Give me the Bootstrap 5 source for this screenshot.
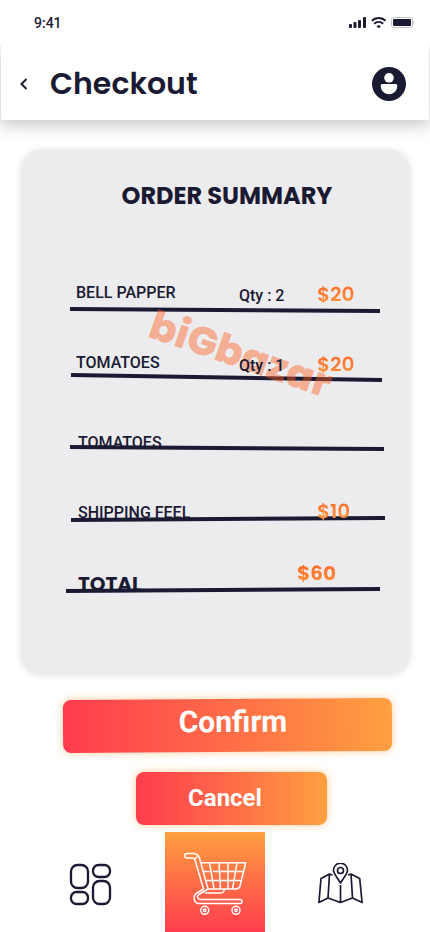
<!DOCTYPE html>
<html lang="en">
<head>
<meta charset="utf-8">
<meta name="viewport" content="width=device-width, initial-scale=1">
<title>Checkout</title>
<link href="https://cdn.jsdelivr.net/npm/bootstrap@5.3.0/dist/css/bootstrap.min.css" rel="stylesheet">
<style>
  :root { --ink: #1b1a33; --sun: #ffa040; --rose: #ff3c4e; }
  body { font-family: Roboto, "Liberation Sans", sans-serif; color: var(--ink); background: #fff; }
  .geo { font-family: Poppins, Inter, sans-serif; }
  svg { display: block; }

  .statusbar { height: 44px; padding: 2px 16px 0 34px; font-size: 14px; background: #fff; z-index: 2; }
  .topbar { height: 76px; margin: 0 1px; padding: 4px 23px 0 18px; background: #fff; box-shadow: 0 4px 16px rgba(0,0,0,.25); z-index: 1; }
  .topbar h1 { font-size: 30px; line-height: 40px; font-weight: 600; }
  .back { margin-right: 20px; }

  .summary { margin: 30px 21px 0 22px; padding: 32px 29px 81px 48px; background: #ececee; border-radius: 20px; box-shadow: 0 1px 8px rgba(0,0,0,.16); }
  .summary h2 { font-size: 24px; line-height: 28px; font-weight: 700; padding-left: 4px; margin-bottom: 32px; }

  .line-item { display: grid; grid-template-columns: 1fr 78px 63px; align-items: end; height: 70px; padding-left: 8px; }
  .line-item > * { grid-row: 1; }
  .item-name, .item-qty { font-size: 16px; line-height: 16px; font-weight: 500; padding-bottom: 1px; }
  .item-name { grid-column: 1; }
  .item-qty { grid-column: 2; position: relative; z-index: 3; }
  .item-price { grid-column: 3; justify-self: start; font-size: 20px; line-height: 20px; font-weight: 600; padding-bottom: 1px; position: relative; z-index: 3;
    color: transparent; background: linear-gradient(#ff6a2b, var(--sun)); -webkit-background-clip: text; background-clip: text; }
  .rule { grid-column: 1 / -1; width: calc(100% + 8px); height: 10px; margin: 0 0 -5px -8px; position: relative; z-index: 1; overflow: visible; }
  .rule line { stroke: var(--ink); stroke-width: 4; }
  .product { padding-left: 6px; }
  .product .rule { width: calc(100% + 6px); margin-left: -6px; }
  .product .item-name { padding-bottom: 11px; }
  .product .item-qty, .product .item-price { padding-bottom: 8px; }
  .wide-rule { margin-right: -4px; grid-template-columns: 1fr 78px 67px; }
  .item-total { margin-left: -4px; padding-left: 12px; grid-template-columns: 1fr 83px; }
  .item-total .rule { width: calc(100% + 12px); margin-left: -12px; }
  .item-total .item-name { font-size: 20px; line-height: 16px; font-weight: 700; padding-bottom: 0; }
  .item-total .item-price { grid-column: 2; padding-bottom: 9px; font-weight: 700; }

  .watermark { position: absolute; left: 76px; top: 88px; z-index: 2; font-size: 40px; line-height: 48px; font-weight: 800;
    color: rgba(255,96,33,.45); transform: rotate(19deg); pointer-events: none; }

  .action { border: 0; border-radius: 8px; height: 53px; color: #fff; font-weight: 700; background: linear-gradient(90deg, var(--rose), #ff6a48 48%, var(--sun)); box-shadow: 0 0 8px rgba(255,160,64,.5); }
  .action:hover { color: #fff; }
  .confirm { margin: 26px 38px 0 63px; padding: 0 0 8px 11px; font-size: 30px; line-height: 36px; transform: rotate(-.35deg); }
  .cancel { margin: 20px 103px 0 136px; padding: 0 13px 2px 0; font-size: 24px; line-height: 28px; }

  .tabs { gap: 53px; margin-top: 7px; padding-left: 2px; }
  .side-tab { padding-top: 4px; }
  .cart-tab { width: 100px; height: 100px; background: linear-gradient(var(--sun), var(--rose)); }
</style>
<script src="https://cdn.jsdelivr.net/npm/bootstrap@5.3.0/dist/js/bootstrap.bundle.min.js"></script>
</head>
<body>
<div class="d-flex flex-column min-vh-100">
  <div class="statusbar d-flex align-items-center justify-content-between position-relative">
    <span class="fw-medium">9:41</span>
    <svg width="67" height="12" viewBox="0 0 67 12" aria-hidden="true">
      <g fill="#1b1a33">
        <rect x="2" y="7" width="3" height="4" rx="1"/><rect x="6.500" y="5" width="3" height="6" rx="1"/>
        <rect x="11" y="3" width="3" height="8" rx="1"/><rect x="16" y="0" width="3" height="11" rx="1"/>
        <path d="M29.400 9.200l2.300 2 2.300-2a3.400 3.400 0 0 0-4.600 0z"/>
        <rect x="46" y="2" width="18" height="7" rx="1"/>
      </g>
      <path d="M24.800 3.700a10 10 0 0 1 13.800 0M27.200 6.700a6.500 6.500 0 0 1 9 0" fill="none" stroke="#1b1a33" stroke-width="1.900"/>
      <rect x="44.500" y=".5" width="21" height="10" rx="2.500" fill="none" stroke="#c3c3ca"/>
      <path d="M66 3.500v4q1-.6 1-2t-1-2z" fill="#c3c3ca"/>
    </svg>
  </div>

  <header class="topbar d-flex align-items-center position-relative">
    <a href="#" class="back" aria-label="Back">
      <svg width="11" height="16" viewBox="0 0 11 16"><path d="M7.500 3L2.500 8l5 5" fill="none" stroke="#1b1a33" stroke-width="2"/></svg>
    </a>
    <h1 class="geo m-0 flex-grow-1">Checkout</h1>
    <a href="#" aria-label="Account">
      <svg width="34" height="34" viewBox="0 0 34 34"><circle cx="17" cy="17" r="17" fill="#1b1a33"/><circle cx="17" cy="10.800" r="4.800" fill="#fff"/><path d="M8.700 18.500q0-1.500 1.500-1.500h13.600q1.500 0 1.500 1.500c0 5-3.500 8.700-8.300 8.700s-8.300-3.700-8.300-8.700z" fill="#fff"/></svg>
    </a>
  </header>

  <main class="d-flex flex-column">
    <section class="summary">
      <h2 class="geo text-center">ORDER SUMMARY</h2>
      <div class="position-relative">
        <ul class="list-unstyled m-0">
          <li class="line-item product">
            <span class="item-name">BELL PAPPER</span>
            <span class="item-qty">Qty : 2</span>
            <span class="item-price geo">$20</span>
            <svg class="rule" viewBox="0 0 310 10" preserveAspectRatio="none"><line x1="0" y1="2" x2="310" y2="4"/></svg>
          </li>
          <li class="line-item product">
            <span class="item-name">TOMATOES</span>
            <span class="item-qty">Qty : 1</span>
            <span class="item-price geo">$20</span>
            <svg class="rule" viewBox="0 0 310 10" preserveAspectRatio="none"><line x1="1" y1="-2" x2="312" y2="3"/></svg>
          </li>
          <li class="line-item wide-rule">
            <span class="item-name">TOMATOES</span>
            <svg class="rule" viewBox="0 0 310 10" preserveAspectRatio="none"><line x1="0" y1="0" x2="310" y2="2"/></svg>
          </li>
          <li class="line-item wide-rule">
            <span class="item-name">SHIPPING FEEL</span>
            <span class="item-price geo">$10</span>
            <svg class="rule" viewBox="0 0 310 10" preserveAspectRatio="none"><line x1="1" y1="3" x2="311" y2="1"/></svg>
          </li>
          <li class="line-item item-total">
            <span class="item-name geo">TOTAL</span>
            <span class="item-price geo">$60</span>
            <svg class="rule" viewBox="0 0 310 10" preserveAspectRatio="none"><line x1="0" y1="4" x2="310" y2="2"/></svg>
          </li>
        </ul>
        <div class="watermark geo">biGbazar</div>
      </div>
    </section>

    <button type="button" class="btn action confirm">Confirm</button>
    <button type="button" class="btn action cancel">Cancel</button>
  </main>

  <nav class="tabs d-flex justify-content-center align-items-center" aria-label="Main">
    <a href="#" class="side-tab" aria-label="Categories">
      <svg width="43" height="43" viewBox="0 0 43 43" fill="none" stroke="#1b1a33" stroke-width="2.300"><rect x="2" y="2" width="17" height="23" rx="6.500"/><rect x="24" y="2" width="17" height="12" rx="5.500"/><rect x="2" y="29" width="17" height="12" rx="5.500"/><rect x="24" y="18" width="17" height="23" rx="6.500"/></svg>
    </a>
    <a href="#" class="cart-tab" aria-label="Cart">
      <svg width="100" height="100" viewBox="0 0 100 100" fill="none" stroke="#fff" stroke-width="1.500" stroke-linejoin="round" stroke-linecap="round">
        <path d="M22 21.500h7q4 .5 5.500 4.500l8.500 31-9 5.500q-2 1.500-1.500 3t2.500 2H75a2 2 0 0 1 0 4H34c-5 0-7-7.500-2-10.500l6.500-4L30 28q-.5-2-3-2h-5a2.200 2.200 0 0 1 0-4.500M30 26.500l3.500-2.500M35.500 30.700h45.200L75 54q-1 3-4 3H43M40.500 61H55q4 0 4.500-3.500M48.500 39.500H78.500M38 39.500h6M40.500 48.500h36M44.500 30.700l4.500 26.300M54 30.700l1.500 26.300M63 30.700v26.300M72 30.700l-4.500 26.300"/>
        <circle cx="39.700" cy="78.300" r="4"/><circle cx="39.700" cy="78.300" r="1.200"/><circle cx="71" cy="78.300" r="4"/><circle cx="71" cy="78.300" r="1.200"/>
      </svg>
    </a>
    <a href="#" class="side-tab" aria-label="Map">
      <svg width="45" height="43" viewBox="0 0 45 43" fill="none" stroke="#1b1a33" stroke-width="1.700" stroke-linejoin="round"><path d="M14.500 12L11.500 11 3 15.500.9 39.500 10 35l12.500 4.500L34.500 35l9.600 4.500L41.700 15.500 33 11l-3 1M11.500 11L10 35M33 11l1.500 24M22.500 22v17.500M22.500 20c-4-6.500-7-9.500-7-12.800a7 7 0 0 1 14 0c0 3.300-3 6.300-7 12.800z"/><circle cx="22.500" cy="7.500" r="3"/></svg>
    </a>
  </nav>
</div>
</body>
</html>
